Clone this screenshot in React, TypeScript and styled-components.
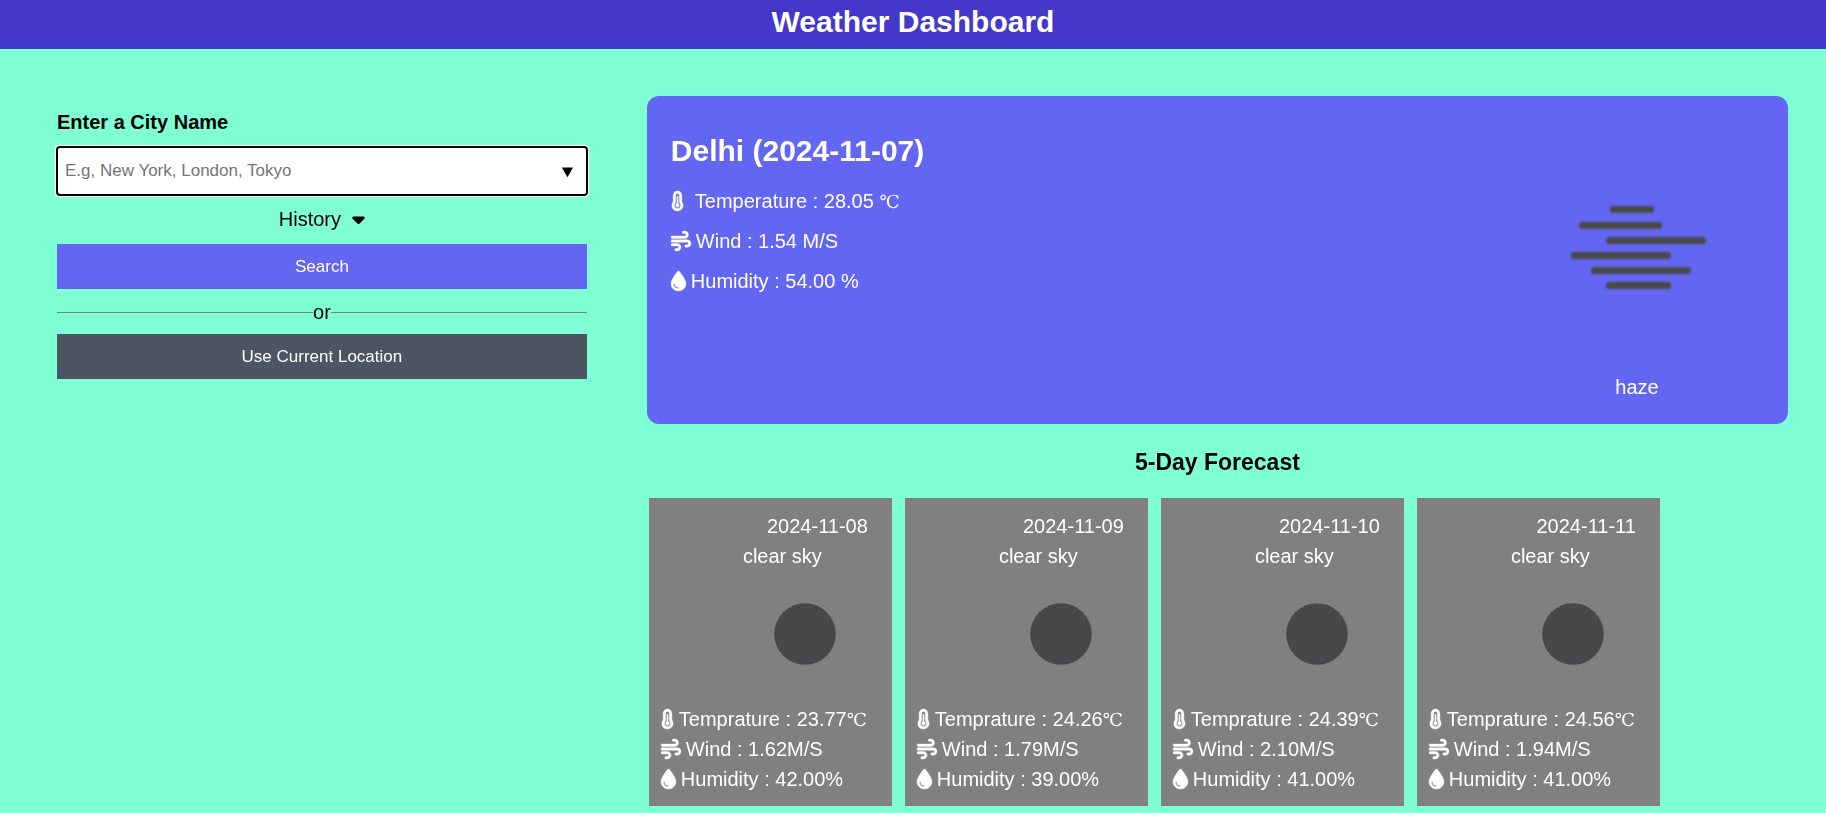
import React from "react";
import styled, { createGlobalStyle } from "styled-components";
import {
  FaCaretDown,
  FaDroplet,
  FaTemperatureThreeQuarters,
  FaWind,
} from "react-icons/fa6";

const GlobalStyle = createGlobalStyle`
  * {
    box-sizing: border-box;
  }
  body {
    margin: 0;
    background: #7fffd4;
    color: #000;
    font-family: Arial, "Liberation Sans", "Noto Sans CJK SC", sans-serif;
    font-size: 20px;
    line-height: 30px;
  }
`;

const Header = styled.header`
  padding: 0 16px 5px;
  background: #4338ca;
  text-align: center;
`;

const PageTitle = styled.h1`
  margin: 0;
  color: #fff;
  font-size: 30px;
  line-height: 44px;
`;

const Main = styled.main`
  display: grid;
  grid-template-columns: minmax(0, 13fr) minmax(0, 28fr);
  align-items: start;
  gap: 60px;
  padding: 47px 38px 7px 57px;
`;

const SearchForm = styled.form`
  display: flex;
  flex-direction: column;
  padding-top: 11px;
`;

const CityLabel = styled.label`
  margin-bottom: 10px;
  font-weight: bold;
`;

const CityInput = styled.input`
  width: 100%;
  height: 48px;
  margin-bottom: 9px;
  padding: 0 8px;
  border: 0;
  border-radius: 2px;
  background: #fff;
  font-family: inherit;
  font-size: 17px;
  &:focus {
    outline: auto;
  }
`;

const HistoryButton = styled.button`
  display: flex;
  align-items: center;
  align-self: center;
  gap: 11px;
  margin-bottom: 10px;
  padding: 0;
  border: 0;
  background: none;
  color: inherit;
  font: inherit;
`;

const CaretIcon = styled(FaCaretDown)`
  width: 13px;
`;

const ThermometerIcon = styled(FaTemperatureThreeQuarters)`
  width: 13px;
`;

const DropletIcon = styled(FaDroplet)`
  width: 15px;
`;

const ActionButton = styled.button<{ $tone: string }>`
  height: 45px;
  padding: 0 16px;
  border: 0;
  background: ${({ $tone }) => $tone};
  color: #fff;
  font-family: inherit;
  font-size: 17px;
`;

const Divider = styled.div`
  display: flex;
  align-items: center;
  padding: 8px 0 7px;
  &::before,
  &::after {
    content: "";
    flex: 1;
    height: 1px;
    background: #808080;
  }
`;

const CurrentCard = styled.section`
  display: flex;
  justify-content: space-between;
  min-height: 328px;
  padding: 32px 50px 20px 24px;
  border-radius: 12px;
  background: #6366f1;
  color: #fff;
`;

const CurrentTitle = styled.h2`
  margin: 0 0 13px;
  font-size: 30px;
  line-height: 45px;
`;

const Reading = styled.p<{ $gap?: number }>`
  display: flex;
  align-items: center;
  gap: ${({ $gap = 5 }) => $gap}px;
  margin: 0;
  white-space: nowrap;
  svg {
    flex-shrink: 0;
    overflow: visible;
    stroke: currentColor;
    stroke-width: 10px;
  }
`;

const CurrentReadings = styled.div`
  display: flex;
  flex-direction: column;
  gap: 10px;
`;

const Degree = styled.span`
  font-family: "DejaVu Serif", serif;
  font-size: 18px;
  line-height: 1;
`;

const Conditions = styled.div`
  display: flex;
  flex-direction: column;
  justify-content: space-between;
  align-items: center;
  width: 200px;
  padding-top: 72px;
`;

const ConditionName = styled.p`
  margin: 0 0 2px;
  padding-right: 2px;
`;

const ForecastTitle = styled.h3`
  margin: 23px 0 21px;
  font-size: 23px;
  line-height: 30px;
  text-align: center;
`;

const ForecastList = styled.ul`
  display: grid;
  grid-template-columns: repeat(auto-fill, 243px);
  gap: 13px;
  margin: 0;
  padding: 0 0 0 2px;
  list-style: none;
`;

const DayCard = styled.li`
  padding: 13px 12px 12px;
  background: #808080;
  color: #fff;
`;

const DayDate = styled.p`
  margin: 0;
  padding-right: 12px;
  text-align: right;
`;

const DaySky = styled.p`
  margin: 0;
  padding-left: 24px;
  text-align: center;
`;

const DayArt = styled.div`
  display: flex;
  justify-content: center;
  padding: 31px 0 38px 70px;
`;

const hazeLines = [
  [44, 84, 9],
  [13, 92, 25],
  [40, 136, 40],
  [5, 101, 55],
  [25, 121, 70],
  [40, 101, 85],
];

function HazeIcon() {
  return (
    <svg width="140" height="100" viewBox="0 0 140 100" role="img" aria-label="haze">
      <filter id="soft" x="-10%" y="-10%" width="120%" height="120%">
        <feGaussianBlur stdDeviation="0.9" />
      </filter>
      <g filter="url(#soft)" fill="#48484a">
        {hazeLines.map(([from, to, y]) => (
          <rect key={y} x={from - 2} y={y - 3} width={to - from + 4} height="7" rx="3" />
        ))}
      </g>
    </svg>
  );
}

function ClearSkyIcon() {
  return (
    <svg width="64" height="64" viewBox="0 0 64 64" role="img" aria-label="clear sky">
      <circle cx="32" cy="32" r="30.8" fill="#48484a" />
    </svg>
  );
}

const days = [
  { date: "2024-11-08", temp: "23.77", wind: "1.62", humidity: "42.00" },
  { date: "2024-11-09", temp: "24.26", wind: "1.79", humidity: "39.00" },
  { date: "2024-11-10", temp: "24.39", wind: "2.10", humidity: "41.00" },
  { date: "2024-11-11", temp: "24.56", wind: "1.94", humidity: "41.00" },
];

export default function App() {
  return (
    <>
      <GlobalStyle />
      <Header>
        <PageTitle>Weather Dashboard</PageTitle>
      </Header>
      <Main>
        <SearchForm onSubmit={(e) => e.preventDefault()}>
          <CityLabel htmlFor="city">Enter a City Name</CityLabel>
          <CityInput
            id="city"
            type="text"
            list="cities"
            placeholder="E.g, New York, London, Tokyo"
            autoComplete="off"
            autoFocus
          />
          <datalist id="cities">
            <option value="Delhi" />
          </datalist>
          <HistoryButton type="button">
            History
            <CaretIcon />
          </HistoryButton>
          <ActionButton type="submit" $tone="#6366f1">
            Search
          </ActionButton>
          <Divider>or</Divider>
          <ActionButton type="button" $tone="#4b5563">
            Use Current Location
          </ActionButton>
        </SearchForm>
        <div>
          <CurrentCard>
            <div>
              <CurrentTitle>Delhi (2024-11-07)</CurrentTitle>
              <CurrentReadings>
                <Reading $gap={11}>
                  <ThermometerIcon />
                  <span>
                    Temperature : 28.05 <Degree>℃</Degree>
                  </span>
                </Reading>
                <Reading>
                  <FaWind />
                  Wind : 1.54 M/S
                </Reading>
                <Reading>
                  <DropletIcon />
                  Humidity : 54.00 %
                </Reading>
              </CurrentReadings>
            </div>
            <Conditions>
              <HazeIcon />
              <ConditionName>haze</ConditionName>
            </Conditions>
          </CurrentCard>
          <ForecastTitle>5-Day Forecast</ForecastTitle>
          <ForecastList>
            {days.map((day) => (
              <DayCard key={day.date}>
                <DayDate>{day.date}</DayDate>
                <DaySky>clear sky</DaySky>
                <DayArt>
                  <ClearSkyIcon />
                </DayArt>
                <Reading>
                  <ThermometerIcon />
                  <span>
                    Temprature : {day.temp}
                    <Degree>℃</Degree>
                  </span>
                </Reading>
                <Reading>
                  <FaWind />
                  Wind : {day.wind}M/S
                </Reading>
                <Reading>
                  <DropletIcon />
                  Humidity : {day.humidity}%
                </Reading>
              </DayCard>
            ))}
          </ForecastList>
        </div>
      </Main>
    </>
  );
}
